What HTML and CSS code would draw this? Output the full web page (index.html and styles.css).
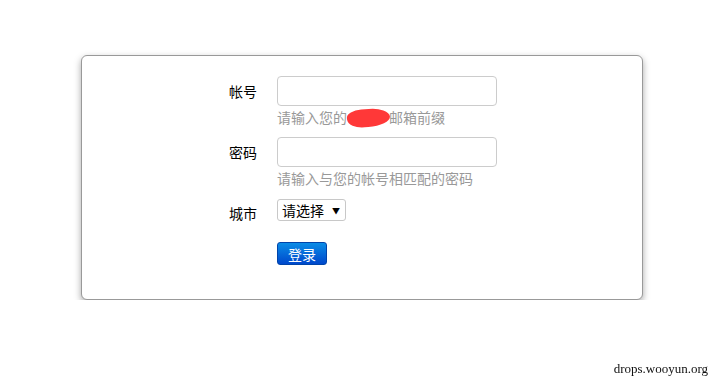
FILE: index.html
```html
<!DOCTYPE html>
<html>
    <head>
        <title>登录</title>
        <meta charset="utf-8">
        <link rel="stylesheet" href="styles.css">
    </head>
    <body>
        <div class="card">
            <form class="form">
                <div class="row">
                    <label class="label" for="user">帐号</label>
                    <div class="controls">
                        <input type="text" id="user" class="field">
                        <p class="help">请输入您的<span class="blot"></span>邮箱前缀</p>
                    </div>
                </div>
                <div class="row">
                    <label class="label" for="pass">密码</label>
                    <div class="controls">
                        <input type="password" id="pass" class="field">
                        <p class="help">请输入与您的帐号相匹配的密码</p>
                    </div>
                </div>
                <div class="row row-city">
                    <label class="label" for="city">城市</label>
                    <div class="controls">
                        <span class="select-wrap">
                            <select id="city" class="select">
                                <option>请选择</option>
                            </select>
                        </span>
                    </div>
                </div>
                <div class="row row-btn">
                    <span class="label"></span>
                    <div class="controls">
                        <button type="button" class="btn">登录</button>
                    </div>
                </div>
            </form>
        </div>
        <div class="mark">drops.wooyun.org</div>
    </body>
</html>
```

FILE: styles.css
```css
* {
    box-sizing: border-box;
}
html, body {
    margin: 0;
    padding: 0;
    background: #fff;
}
body {
    font-family: "Noto Sans CJK SC", "Liberation Sans", sans-serif;
    font-size: 14px;
    color: #000;
}
.card {
    width: 562px;
    height: 245px;
    margin: 55px 0 0 81px;
    padding: 20px 15px;
    border: 1px solid #999;
    border-radius: 6px;
    box-shadow: 0 3px 7px rgba(0, 0, 0, 0.35);
    background: #fff;
}
.form {
    margin: 0;
}
.row {
    display: flex;
    align-items: flex-start;
    margin-bottom: 10px;
}
.label {
    width: 160px;
    margin-right: 20px;
    text-align: right;
    line-height: 30px;
    height: 30px;
}
.controls {
    width: 240px;
}
.field {
    display: block;
    width: 220px;
    height: 30px;
    margin: 0;
    border: 1px solid #ccc;
    border-radius: 4px;
    background: #fff;
    outline: none;
}
.help {
    margin: 1px 0 0;
    line-height: 20px;
    color: #999;
    white-space: nowrap;
}
.blot {
    display: inline-block;
    width: 43px;
    height: 18px;
    margin-right: -1px;
    vertical-align: -4px;
    background: #ff3838;
    border-radius: 40% 55% 60% 45% / 45% 60% 55% 60%;
    transform: rotate(-5deg);
}
.row-city {
    margin-top: 11px;
    margin-bottom: 13px;
}
.row-city .label {
    line-height: 28px;
}
.select-wrap {
    position: relative;
    display: inline-block;
}
.select-wrap::after {
    content: "\25BC";
    position: absolute;
    right: 6px;
    top: 6px;
    font-size: 8px;
    color: #000;
    pointer-events: none;
}
.select {
    -webkit-appearance: none;
    appearance: none;
    width: 69px;
    height: 22px;
    padding: 0 0 0 4px;
    margin: 0;
    border: 1px solid #c8c8c8;
    border-radius: 3px;
    background: #fff;
    font-family: inherit;
    font-size: 14px;
    color: #000;
}
.row-btn .label {
    height: 23px;
}
.btn {
    width: 50px;
    height: 23px;
    padding: 0;
    border: 1px solid #0044aa;
    border-radius: 3px;
    background: linear-gradient(to bottom, #0a8ce6, #0048cc);
    color: #fff;
    font-family: inherit;
    font-size: 14px;
    line-height: 20px;
    cursor: pointer;
}
.mark {
    position: fixed;
    right: 5px;
    bottom: 6px;
    font-family: "Liberation Serif", serif;
    font-size: 13px;
    color: #111;
}
```
